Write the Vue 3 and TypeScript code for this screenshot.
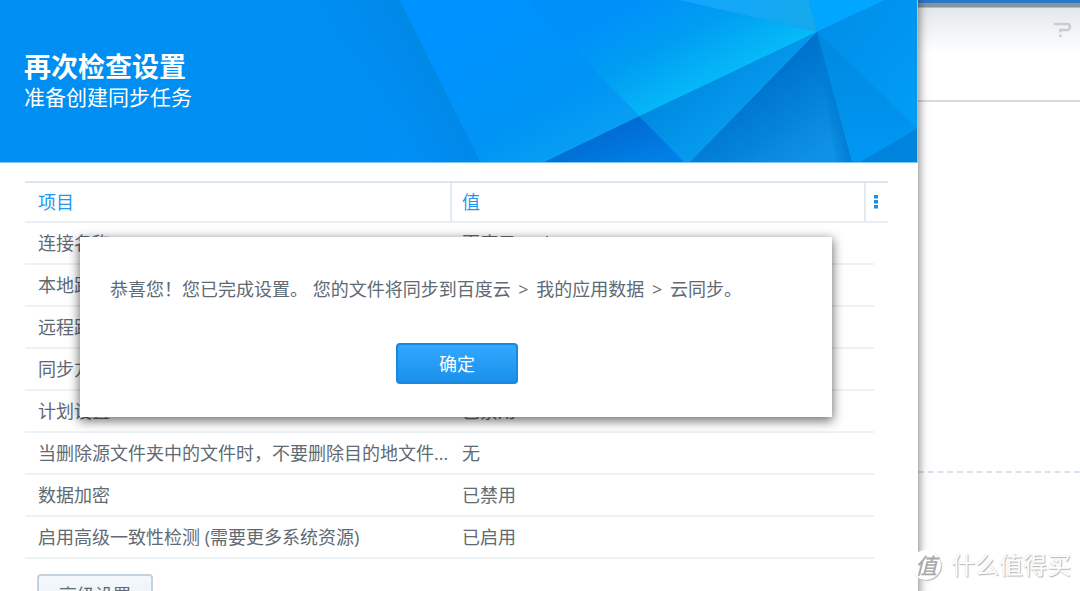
<script setup lang="ts">
interface SettingRow {
  label: string
  value: string
}

const rows: SettingRow[] = [
  { label: '连接名称', value: '百度云 web' },
  { label: '本地路径', value: '/homes' },
  { label: '远程路径', value: '云同步' },
  { label: '同步方向', value: '双向' },
  { label: '计划设置', value: '已禁用' },
  { label: '当删除源文件夹中的文件时，不要删除目的地文件...', value: '无' },
  { label: '数据加密', value: '已禁用' },
  { label: '启用高级一致性检测 (需要更多系统资源)', value: '已启用' },
]
</script>

<template>
  <div class="desktop">
    <main class="wizard">
      <header class="banner">
        <svg class="facets" viewBox="0 0 918 163" preserveAspectRatio="none" aria-hidden="true">
          <defs>
            <linearGradient id="base" x1="0" x2="1" y1="0" y2="0">
              <stop offset="0" stop-color="#008ef2" />
              <stop offset=".7" stop-color="#008ef2" />
              <stop offset="1" stop-color="#0092fb" />
            </linearGradient>
            <linearGradient id="fold" gradientUnits="userSpaceOnUse" x1="370" y1="110" x2="446" y2="72">
              <stop offset="0" stop-color="#0089e8" stop-opacity="0" />
              <stop offset="1" stop-color="#0087e4" />
            </linearGradient>
            <linearGradient id="middle" gradientUnits="userSpaceOnUse" x1="500" y1="10" x2="590" y2="170">
              <stop offset="0" stop-color="#0092ff" />
              <stop offset=".6" stop-color="#0094f4" />
              <stop offset="1" stop-color="#0ca3f2" />
            </linearGradient>
            <linearGradient id="cyan" gradientUnits="userSpaceOnUse" x1="655" y1="-10" x2="710" y2="92">
              <stop offset="0" stop-color="#0090fa" />
              <stop offset=".45" stop-color="#009df2" />
              <stop offset="1" stop-color="#06bcf8" />
            </linearGradient>
            <linearGradient id="crown" x1="0" x2="1" y1="0" y2="0">
              <stop offset="0" stop-color="#14a6ff" />
              <stop offset="1" stop-color="#15a9ec" />
            </linearGradient>
            <linearGradient id="blade" gradientUnits="userSpaceOnUse" x1="690" y1="80" x2="740" y2="140">
              <stop offset="0" stop-color="#008ae2" />
              <stop offset="1" stop-color="#069ff2" />
            </linearGradient>
            <linearGradient id="dark" gradientUnits="userSpaceOnUse" x1="750" y1="85" x2="805" y2="165">
              <stop offset="0" stop-color="#0072cb" />
              <stop offset=".5" stop-color="#0482da" />
              <stop offset="1" stop-color="#0f91e6" />
            </linearGradient>
            <linearGradient id="shade" gradientUnits="userSpaceOnUse" x1="826" y1="130" x2="846" y2="125">
              <stop offset="0" stop-color="#007bd2" stop-opacity="0" />
              <stop offset="1" stop-color="#007bd2" />
            </linearGradient>
            <linearGradient id="floor" gradientUnits="userSpaceOnUse" x1="610" y1="125" x2="625" y2="170">
              <stop offset="0" stop-color="#006ad0" />
              <stop offset="1" stop-color="#007fe6" />
            </linearGradient>
            <linearGradient id="wing" x1="0" x2="1" y1="0" y2="1">
              <stop offset="0" stop-color="#008de6" />
              <stop offset="1" stop-color="#009df8" />
            </linearGradient>
            <linearGradient id="tail" x1="0" x2="0" y1="0" y2="1">
              <stop offset="0" stop-color="#0088de" />
              <stop offset="1" stop-color="#0098f4" />
            </linearGradient>
          </defs>
          <path fill="url(#base)" d="M0 0H400L481 163H0z" />
          <path fill="url(#fold)" d="M320 0H400L481 163H320z" />
          <path fill="url(#middle)" d="M400 0H527L640 117L545 163H481z" />
          <path fill="url(#cyan)" d="M527 0H680L818 32L640 117z" />
          <path fill="url(#crown)" d="M680 0H810L818 32z" />
          <path fill="#00a6ff" d="M810 0H886L818 32z" />
          <path fill="url(#floor)" d="M545 163L640 117L685 163z" />
          <path fill="url(#blade)" d="M640 117L818 32L691 163H685z" />
          <path fill="url(#dark)" d="M818 32L853 163H691z" />
          <path fill="url(#shade)" d="M818 32L853 163H836z" />
          <path fill="url(#wing)" d="M818 32L886 0H918V129z" />
          <path fill="url(#tail)" d="M818 32L918 129L861 163H853z" />
          <path fill="#0083dc" d="M861 163L918 130V163z" />
        </svg>
        <h1>再次检查设置</h1>
        <p>准备创建同步任务</p>
      </header>

      <section class="content">
        <table class="summary">
          <thead>
            <tr>
              <th scope="col">项目</th>
              <th scope="col">值</th>
              <th scope="col">
                <button class="columns" type="button" aria-label="列">
                  <svg width="4" height="14" viewBox="0 0 4 14" fill="#1a8fe6" aria-hidden="true">
                    <path d="M0 0h4v3.5H0zM0 5h4v3.5H0zM0 10h4v3.5H0z" />
                  </svg>
                </button>
              </th>
            </tr>
          </thead>
          <tbody>
            <tr v-for="row in rows" :key="row.label">
              <td>{{ row.label }}</td>
              <td>{{ row.value }}</td>
            </tr>
          </tbody>
        </table>
        <button class="advanced" type="button">高级设置</button>
      </section>

      <div class="dialog" role="alertdialog" aria-modal="true" aria-describedby="message">
        <p id="message">恭喜您！您已完成设置。 您的文件将同步到百度云 <span class="step">&gt;</span> 我的应用数据 <span class="step">&gt;</span> 云同步。</p>
        <button class="confirm" type="button">确定</button>
      </div>
    </main>

    <aside class="behind">
      <div class="titlebar">
        <button class="help" type="button" aria-label="帮助">
          <svg width="18" height="16" viewBox="0 0 18 16" fill="none" stroke="#c9cdd1" stroke-width="2.4" aria-hidden="true">
            <path d="M0 2H13.2Q16 2 16 4.8T13.2 8H6.3V10.6" />
            <path d="M6.3 12.6V15.2" />
          </svg>
        </button>
      </div>
      <div class="pane"></div>
    </aside>

    <div class="watermark">
      <span class="seal">值</span>
      <span class="brand">什么值得买</span>
    </div>
  </div>
</template>

<style>
body {
  margin: 0;
}
</style>

<style scoped>
.desktop {
  position: relative;
  display: grid;
  grid-template-columns: 85fr 15fr;
  height: 100vh;
  overflow: hidden;
  background: #fff;
  color: #606a74;
  font: 18px/26px "Open Sans", "Noto Sans CJK SC", sans-serif;
}

button {
  font: inherit;
  color: inherit;
  box-sizing: border-box;
}

h1,
p {
  margin: 0;
}

.wizard {
  position: relative;
  z-index: 1;
  min-width: 0;
  background: #fff;
  box-shadow: 0 0 9px 1px rgba(0, 0, 0, 0.5);
}

.banner {
  position: relative;
  box-sizing: border-box;
  height: 163px;
  padding: 50px 24px 0;
  background: #008ef2;
  border-right: 1px solid #8fd0fa;
  border-bottom: 1px solid #7cc8fa;
  color: #fff;
}

.facets {
  position: absolute;
  inset: 0;
  width: 100%;
  height: 100%;
}

.banner h1,
.banner p {
  position: relative;
}

.banner h1 {
  font-size: 27px;
  line-height: 34px;
  font-weight: 700;
}

.banner p {
  font-size: 21px;
  line-height: 26px;
}

.content {
  padding: 18px 30px 0 25px;
}

.summary {
  display: block;
}

.summary thead,
.summary tbody {
  display: block;
}

.summary tr {
  display: grid;
  box-sizing: border-box;
}

.summary thead tr {
  grid-template-columns: 427fr 414fr 22px;
  height: 42px;
  border-top: 2px solid #dce6ee;
  border-bottom: 2px solid #e8eff5;
}

.summary tbody tr {
  grid-template-columns: 427fr 422fr;
  height: 42px;
  margin-right: 14px;
  border-bottom: 2px solid #edf2f7;
}

.summary th,
.summary td {
  display: flex;
  align-items: center;
  min-width: 0;
  padding: 0 0 0 13px;
  font-weight: 400;
  white-space: nowrap;
}

.summary td:last-child,
.summary th:nth-child(2) {
  padding-left: 10px;
}

.summary th {
  color: #2196ee;
  border-right: 2px solid #e2eaf3;
}

.summary th:last-child {
  padding: 0 0 0 8px;
  border-right: 0;
}

.columns,
.help {
  display: flex;
  padding: 0;
  border: 0;
  background: none;
}

.advanced {
  display: block;
  height: 41px;
  margin: 15px 0 0 12px;
  padding: 0 20px;
  border: 2px solid #c5d1dc;
  border-radius: 4px;
  background: linear-gradient(#f4f8fc, #e9f0f6);
}

.dialog {
  position: absolute;
  top: 237px;
  left: 80px;
  right: 86px;
  display: flex;
  flex-direction: column;
  align-items: center;
  gap: 41px;
  box-sizing: border-box;
  padding: 39px 28px 33px 30px;
  background: #fff;
  box-shadow: 0 3px 10px 1px rgba(0, 0, 0, 0.55);
}

.dialog p {
  align-self: stretch;
}

.step {
  margin: 0 3px;
}

.confirm {
  width: 122px;
  height: 41px;
  border: 2px solid #1b88dd;
  border-radius: 4px;
  background: linear-gradient(#33a8ff, #1a90ea);
  color: #fff;
}

.behind {
  min-width: 0;
}

.titlebar {
  display: flex;
  justify-content: flex-end;
  box-sizing: border-box;
  height: 102px;
  padding: 15px 8px 0 0;
  border-top: 3px solid #2a78c5;
  border-bottom: 2px solid #dadada;
  background: linear-gradient(#8593a3 4px, #e3e7ec 5px, #fff 50px);
}

.help {
  align-self: flex-start;
  margin-top: 4px;
}

.pane {
  height: 369px;
  border-bottom: 2px dashed #d7e3ee;
}

.watermark {
  position: absolute;
  z-index: 2;
  right: 9px;
  bottom: 10px;
  display: flex;
  align-items: center;
  gap: 10px;
  color: #fff;
  text-shadow: 1px 1px 1px #b4b4b4, 0 0 1px #ccc;
}

.seal {
  width: 30px;
  height: 30px;
  border-radius: 50%;
  background: #fff;
  box-shadow: 1px 1px 1px #bbb;
  color: #aaa;
  font-size: 22px;
  font-style: italic;
  font-weight: 500;
  line-height: 30px;
  text-align: center;
  text-shadow: none;
}

.brand {
  font-size: 24px;
  line-height: 32px;
}
</style>
